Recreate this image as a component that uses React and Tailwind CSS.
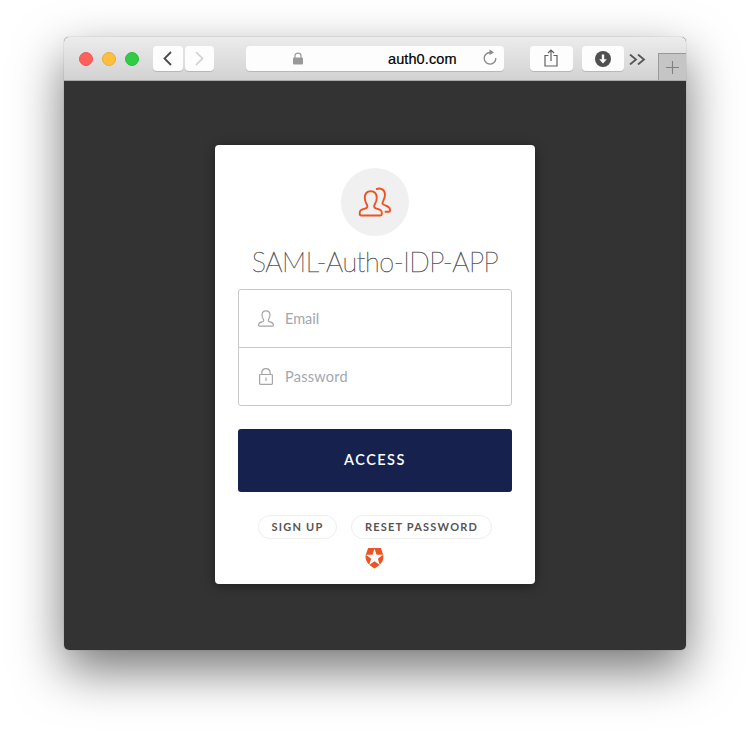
const USER = "M13 1c4 0 6.500 2.300 6.500 7c0 3.500-1.600 5.500-2.600 7.500c-.8 1.700.3 2.900 2.500 3.500C23 19.900 25 20.500 25 23.500v1q0 1.500-1.500 1.500h-21q-1.500 0-1.500-1.500v-1C1 20.500 3 19.900 6.600 19c2.200-.6 3.300-1.800 2.500-3.500c-1-2-2.600-4-2.600-7.500c0-4.700 2.500-7 6.500-7z";

function Toolbar() {
  const button = "h-[25px] shrink-0 rounded bg-[#fdfdfd] shadow-[0_1px_0_rgba(0,0,0,0.14)] flex items-center justify-center";
  return (
    <header className="relative flex h-11 w-full items-start bg-linear-to-b from-[#ececec] to-[#d2d2d2] pt-[9px] pl-[15px] border-b border-[#aaa]">
      <div className="mt-[6px] flex gap-[9px]">
        <i className="size-[14px] rounded-full border border-[#ed5752] bg-[#fe605b]" />
        <i className="size-[14px] rounded-full border border-[#e7ad35] bg-[#ffbe3d]" />
        <i className="size-[14px] rounded-full border border-[#28bb3d] bg-[#32cb48]" />
      </div>
      <button className={`${button} ml-[14px] w-[30px]`}>
        <svg className="-ml-[2px]" width="9" height="15" viewBox="0 0 9 15" fill="none" stroke="#494949" strokeWidth="1.800"><path d="M8 1 1.500 7.500 8 14" /></svg>
      </button>
      <button className={`${button} ml-[1.500px] w-[29.500px]`}>
        <svg width="9" height="15" viewBox="0 0 9 15" fill="none" stroke="#cfcfcf" strokeWidth="1.600"><path d="m1 1 6.500 6.500L1 14" /></svg>
      </button>
      <div className={`${button} ml-[32px] w-[258px] !justify-start`}>
        <svg className="ml-[47px]" width="10" height="13" viewBox="0 0 10 13"><path d="M2 6V3.800C2 .3 8 .3 8 3.800V6" fill="none" stroke="#999" strokeWidth="1.200" /><rect y="5.500" width="10" height="7" rx="1" fill="#999" /></svg>
        <span className="ml-[85px] w-[72px] pt-px font-['Liberation_Sans',sans-serif] text-[14.500px] leading-[20px] tracking-[0.100px] text-black [-webkit-text-stroke:0.200px_black]">auth0.com</span>
        <svg className="ml-[22.500px] -mt-[3px]" width="14" height="16" viewBox="0 0 14 16"><path d="M7 3.500A5.800 5.800 0 1 0 12.800 9" fill="none" stroke="#888" strokeWidth="1.300" /><path d="M6.500.5 11 3.400 6.500 6z" fill="#888" /></svg>
      </div>
      <button className={`${button} ml-[26px] w-[42.500px]`}>
        <svg width="14" height="18" viewBox="0 0 14 18" fill="none" stroke="#606060" strokeWidth="1.200" className="-mt-[2px]"><path d="M4.500 6.500H1v10.500h12V6.500H9.500M7 12V1M4 4l3-3 3 3" /></svg>
      </button>
      <button className={`${button} ml-[9px] w-[42px]`}>
        <svg width="16" height="16" viewBox="0 0 16 16"><circle cx="8" cy="8" r="8" fill="#505050" /><path d="M6.800 3.500h2.400v4.800h2.600L8 12.500 4.200 8.300h2.600z" fill="white" /></svg>
      </button>
      <svg className="mt-[8px] ml-[5px]" width="17" height="11" viewBox="0 0 17 11" fill="none" stroke="#555" strokeWidth="1.800"><path d="m1 .5 6 5-6 5M9 .5l6 5-6 5" /></svg>
      <div className="absolute right-0 bottom-0 flex h-[27px] w-[28px] items-center justify-center border-t border-l border-[#999] bg-[#c5c5c5]">
        <svg width="13" height="13" viewBox="0 0 13 13" stroke="#808080" strokeWidth="1.100"><path d="M6.500 0v13M0 6.500h13" /></svg>
      </div>
    </header>
  );
}

export default function App() {
  return (
    <div className="h-[741px] w-[750px] overflow-hidden bg-white px-16 pt-[37px] font-['Lato',sans-serif]">
      <div className="h-[613px] w-[622px] rounded-[5px] shadow-[0_0_1px_rgba(0,0,0,0.5),0_20px_50px_rgba(0,0,0,0.54)]">
        <div className="flex h-full flex-col overflow-hidden rounded-[5px] bg-[#333]">
          <Toolbar />
          <main className="flex flex-1 items-start justify-center pt-16">
            <section className="flex h-[439px] w-[320px] flex-col items-center rounded-[4px] bg-white px-[23px] pt-[23px] shadow-[0_2px_12px_rgba(0,0,0,0.4)]">
              <div className="flex size-[68px] shrink-0 items-center justify-center rounded-full bg-[#f0f0f0]">
                <svg width="34" height="30" viewBox="0 0 34 30" fill="none" stroke="#eb5424" strokeWidth="1.900" strokeLinecap="round" strokeLinejoin="round">
                  <path transform="translate(.8 3.200) scale(.92 .97)" d={USER} strokeWidth="2.050" />
                  <path d="M18.800 2C21.500 1 26.800 1.300 27 7.500c0 3.500-1.500 5.500-2.300 7.800c-.7 2 .8 2.500 2.800 3.200c3 1 4.500 1.800 4.500 4.200v1q0 1-1 1h-3.500" />
                </svg>
              </div>
              <h1 className="mt-[8px] h-[36px] w-[274px] text-center text-[27px] leading-[36px] font-thin tracking-[-0.450px] whitespace-nowrap text-[#444] [-webkit-text-stroke:0.450px_#555]">SAML-Autho-IDP-APP</h1>
              <form className="mt-[9px] w-[274px] shrink-0 rounded-[3px] border border-[#c9c9c9]">
                <label className="flex h-[58px] items-center border-b border-[#c9c9c9] pl-[19px]">
                  <svg width="16" height="17" viewBox="0 0 26 27" fill="none" stroke="#a5a5a5" strokeWidth="1.900"><path d={USER} /></svg>
                  <span className="ml-[11px] text-[14.500px] text-[#a3a6b0]">Email</span>
                </label>
                <label className="flex h-[57px] items-center pl-[20px]">
                  <svg width="14" height="17" viewBox="0 0 14 17" fill="none" stroke="#a5a5a5" strokeWidth="1.200"><rect x=".6" y="6.500" width="12.800" height="9.800" rx=".8" /><path d="M2.800 6.500V5c0-5.800 8.400-5.800 8.400 0v1.500M7 9.500v3.500" /></svg>
                  <span className="ml-[12px] text-[14.500px] tracking-[0.250px] text-[#a3a6b0]">Password</span>
                </label>
              </form>
              <button className="mt-[23px] h-[62.500px] w-[274px] shrink-0 rounded-[3px] bg-[#16214d] text-[14.500px] font-semibold tracking-[1.500px] text-white">ACCESS</button>
              <div className="mt-[23.500px] flex w-[234px] shrink-0 justify-between text-[11px] font-bold tracking-[1.200px] text-[#555]">
                <button className="h-6 w-[79px] rounded-full border border-[#eee] whitespace-nowrap">SIGN UP</button>
                <button className="h-6 w-[141px] rounded-full border border-[#eee] whitespace-nowrap">RESET PASSWORD</button>
              </div>
              <svg className="mt-[9px] mr-px shrink-0" width="19" height="20.500" viewBox="0 0 19 21"><path d="M3 0h13l2.300 6.500c1.300 5.500-1 10-8.800 14.500C1.700 16.500-.6 12 .7 6.500z" fill="#eb5424" /><path d="m9.500.7 2.100 6.300h6.700l-5.400 4 2.100 6.500-5.500-4-5.500 4 2.100-6.500L.7 7h6.700z" fill="white" /></svg>
            </section>
          </main>
        </div>
      </div>
    </div>
  );
}
